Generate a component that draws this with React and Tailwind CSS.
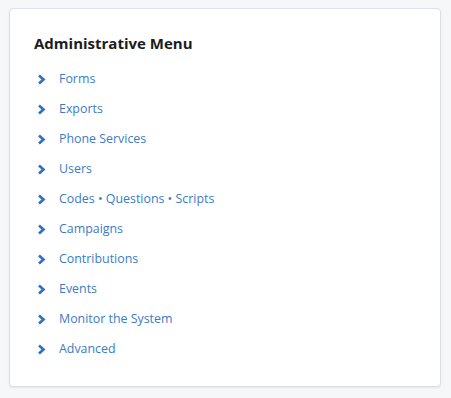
import React from 'react';

const items = [
  'Forms',
  'Exports',
  'Phone Services',
  'Users',
  'Codes • Questions • Scripts',
  'Campaigns',
  'Contributions',
  'Events',
  'Monitor the System',
  'Advanced',
];

const Chevron = () => (
  <svg width="9" height="11" viewBox="0 0 9 11" className="text-[#2f6fbf] shrink-0">
    <path d="M2 1.5 L6.5 5.5 L2 9.5" fill="none" stroke="currentColor" strokeWidth="2.6" strokeLinejoin="miter" />
  </svg>
);

const App = () => {
  return (
    <div className="w-[451px] h-[398px] bg-[#f6f7f9] pt-[8px] pl-[9px]" style={{ fontFamily: '"Open Sans", "Noto Sans", sans-serif' }}>
      <div className="w-[432px] h-[379px] bg-white border border-[#dcdfe3] rounded-[4px] shadow-[0_1px_2px_rgba(0,0,0,0.08)] pl-[24px] pt-[24px]">
        <h2 className="text-[15px] font-bold text-[#1c1c1c] leading-[20px]">Administrative Menu</h2>
        <ul className="mt-[11px]">
          {items.map((item) => (
            <li key={item} className="flex items-center h-[30px]">
              <span className="w-[25px] pl-[3px] flex items-center">
                <Chevron />
              </span>
              <a href="#" className="text-[12.4px] text-[#3a7bc8] leading-[18px]">{item}</a>
            </li>
          ))}
        </ul>
      </div>
    </div>
  );
};

export default App;
